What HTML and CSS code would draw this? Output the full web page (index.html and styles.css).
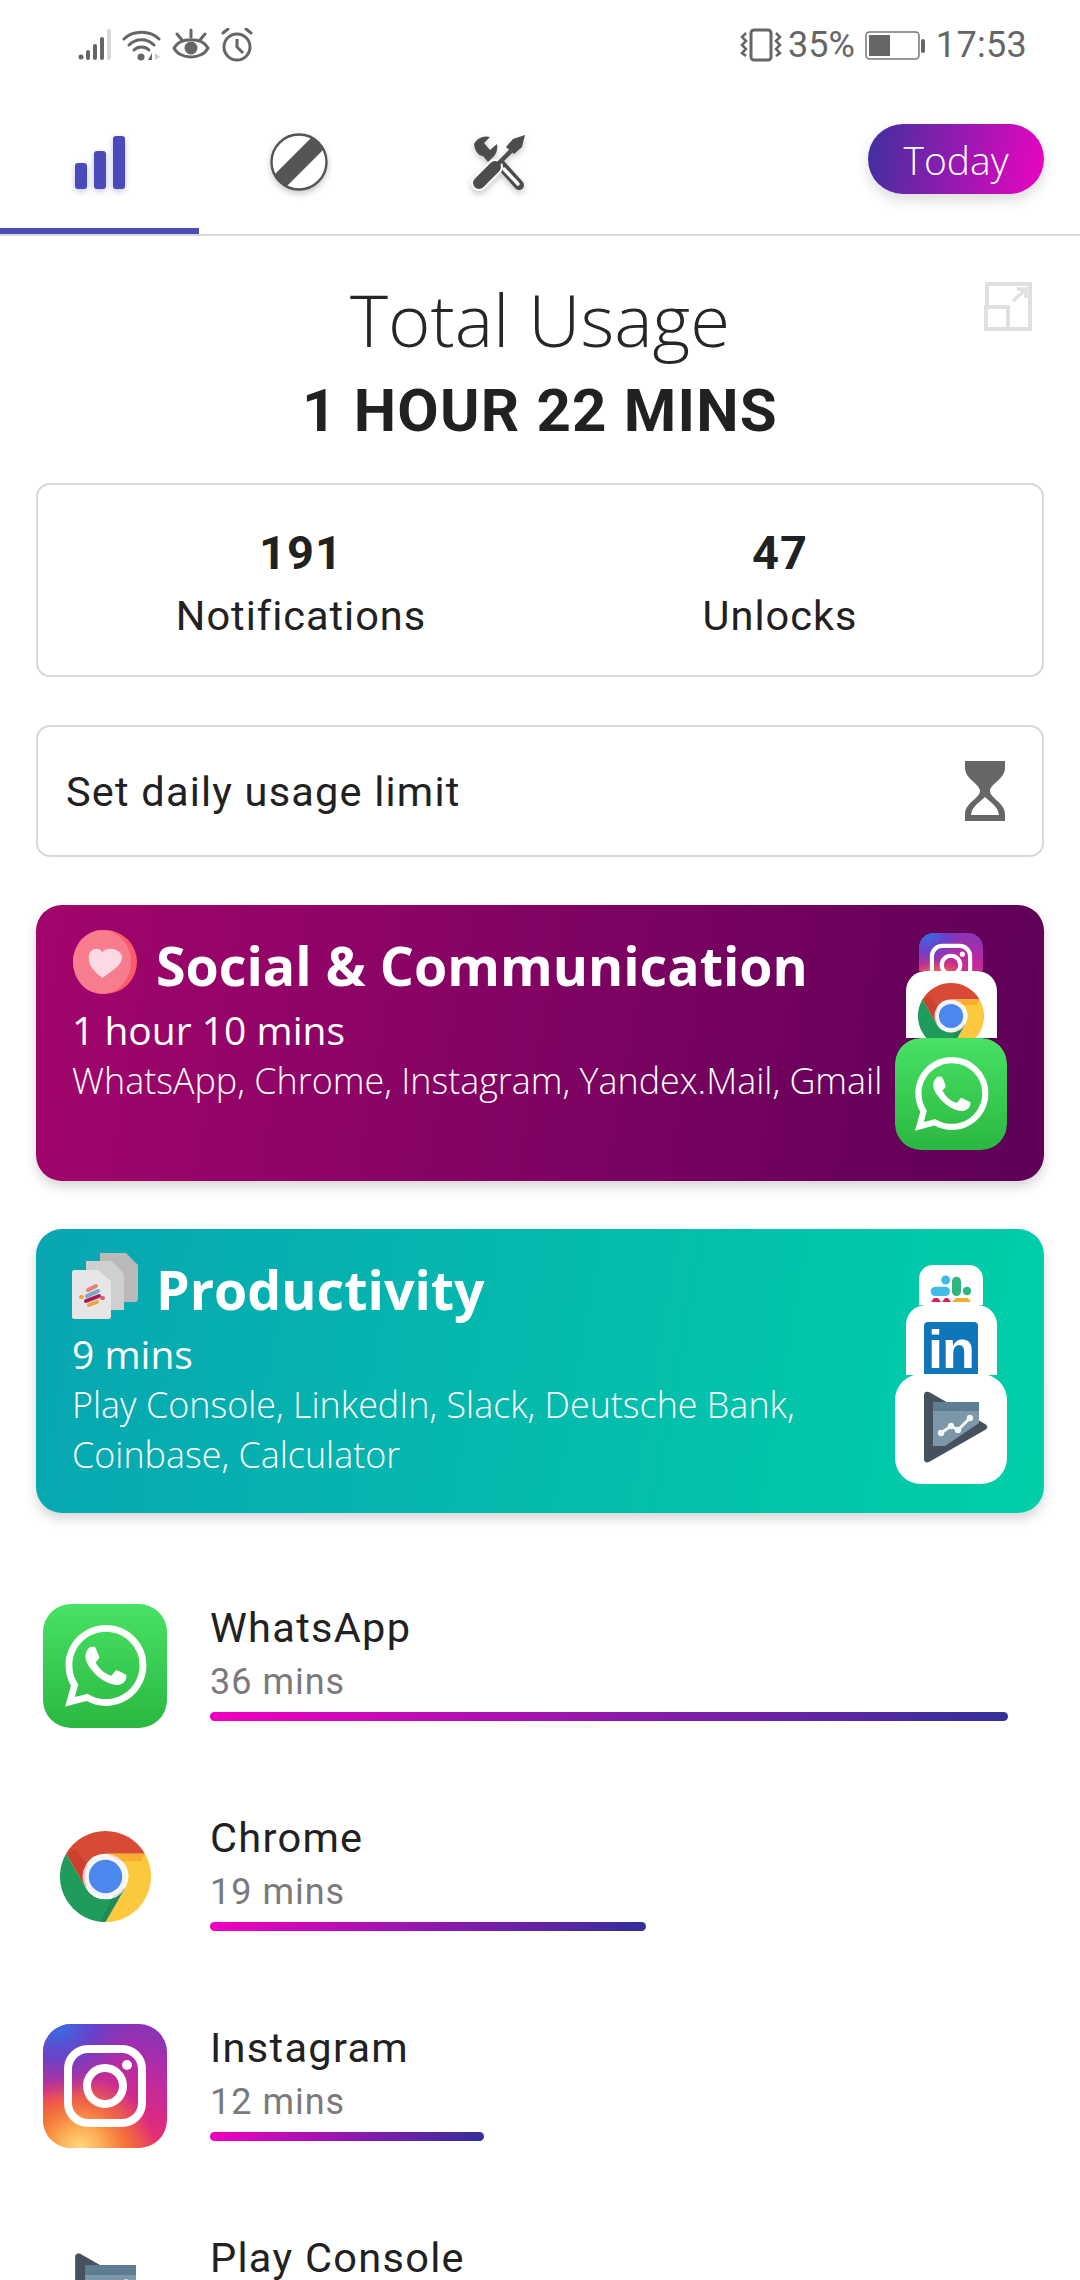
FILE: index.html
```html
<!DOCTYPE html>
<html lang="en">
<head>
<meta charset="utf-8">
<title>Total Usage</title>
<link rel="stylesheet" href="styles.css">
</head>
<body>
<svg class="defs" aria-hidden="true">
  <defs>
    <clipPath id="blockClip"><circle cx="30" cy="30" r="28"/></clipPath>
    <linearGradient id="waGrad" x1="0" y1="0" x2="0" y2="1"><stop offset="0" stop-color="#48e264"/><stop offset="1" stop-color="#2bb741"/></linearGradient>
    <linearGradient id="igBase" x1="0.25" y1="1" x2="0.6" y2="0"><stop offset="0" stop-color="#f0682f"/><stop offset="0.3" stop-color="#e42c78"/><stop offset="0.7" stop-color="#bd2a9f"/><stop offset="1" stop-color="#8f32b6"/></linearGradient>
    <radialGradient id="igGlow" cx="0.3" cy="1.02" r="0.6"><stop offset="0" stop-color="#ffdc84"/><stop offset="0.3" stop-color="#fcae55"/><stop offset="0.65" stop-color="#f77e2e" stop-opacity="0.7"/><stop offset="1" stop-color="#f77e2e" stop-opacity="0"/></radialGradient>
    <radialGradient id="igBlue" cx="0.12" cy="0" r="0.6"><stop offset="0" stop-color="#2f74e6"/><stop offset="0.5" stop-color="#5b45d0" stop-opacity="0.8"/><stop offset="1" stop-color="#6a3fc8" stop-opacity="0"/></radialGradient>
    <symbol id="whatsapp" viewBox="0 0 124 124">
      <rect width="124" height="124" rx="28" fill="url(#waGrad)"/>
      <g transform="translate(22 21) scale(3.4)"><path fill="#fff" d="M17.472 14.382c-.297-.149-1.758-.867-2.03-.967-.273-.099-.471-.148-.67.15-.197.297-.767.966-.94 1.164-.173.199-.347.223-.644.075-.297-.15-1.255-.463-2.39-1.475-.883-.788-1.48-1.761-1.653-2.059-.173-.297-.018-.458.13-.606.134-.133.298-.347.446-.52.149-.174.198-.298.298-.497.099-.198.05-.371-.025-.52-.075-.149-.669-1.612-.916-2.207-.242-.579-.487-.5-.669-.51-.173-.008-.371-.01-.57-.01-.198 0-.52.074-.792.372-.272.297-1.04 1.016-1.04 2.479 0 1.462 1.065 2.875 1.213 3.074.149.198 2.096 3.2 5.077 4.487.709.306 1.262.489 1.694.625.712.227 1.36.195 1.871.118.571-.085 1.758-.719 2.006-1.413.248-.694.248-1.289.173-1.413-.074-.124-.272-.198-.57-.347m-5.421 7.403h-.004a9.87 9.87 0 01-5.031-1.378l-.361-.214-3.741.982.998-3.648-.235-.374a9.86 9.86 0 01-1.51-5.26c.001-5.45 4.436-9.884 9.888-9.884 2.64 0 5.122 1.03 6.988 2.898a9.825 9.825 0 012.893 6.994c-.003 5.45-4.437 9.884-9.885 9.884m8.413-18.297A11.815 11.815 0 0012.05 0C5.495 0 .16 5.335.157 11.892c0 2.096.547 4.142 1.588 5.945L.057 24l6.305-1.654a11.882 11.882 0 005.683 1.448h.005c6.554 0 11.89-5.335 11.893-11.893a11.821 11.821 0 00-3.48-8.413z"/></g>
    </symbol>
    <symbol id="chrome" viewBox="0 0 90 90">
      <path fill="#d94a36" d="M45 0A45 45 0 0 1 84 22.5H45A22.5 22.5 0 0 0 25.5 56.25L6 22.5A45 45 0 0 1 45 0Z"/>
      <path fill="#fcc83d" d="M84 22.5A45 45 0 0 1 45 90L64.5 56.25A22.5 22.5 0 0 0 45 22.5Z"/>
      <path fill="#1f9b5c" d="M6 22.5A45 45 0 0 0 45 90L64.5 56.25A22.5 22.5 0 0 1 25.5 56.25Z"/>
      <path fill="#a52714" opacity=".25" d="M25.5 56.25L6 22.5L16 18L33 42Z"/>
      <path fill="#ea6100" opacity=".25" d="M45 22.5H84L80 30H60Z"/>
      <path fill="#263238" opacity=".15" d="M45 90L64.5 56.25L57 55L40 89.7Z"/>
      <circle cx="45" cy="45" r="20.5" fill="#f4f4f4"/>
      <circle cx="45" cy="45" r="16.5" fill="#4a88ee"/>
    </symbol>
    <symbol id="instagram" viewBox="0 0 124 124">
      <rect width="124" height="124" rx="28" fill="url(#igBase)"/>
      <rect width="124" height="124" rx="28" fill="url(#igGlow)"/>
      <rect width="124" height="124" rx="28" fill="url(#igBlue)"/>
      <rect x="25" y="25" width="74" height="74" rx="20" fill="none" stroke="#fff" stroke-width="8"/>
      <circle cx="62" cy="62" r="18" fill="none" stroke="#fff" stroke-width="8"/>
      <circle cx="84" cy="41" r="5" fill="#fff"/>
    </symbol>
    <symbol id="playconsole" viewBox="0 0 112 112">
      <path fill="#45525e" d="M29 21c0-3 2-4 5-3l56 32c3 2 3 4 0 6L34 88c-3 1-5 0-5-3Z"/>
      <path fill="#5d7d92" d="M38 28H84V37H38Z"/>
      <path fill="#7c97a9" d="M38 37H84V49L50 72H38Z"/>
      <path fill="none" stroke="#f3f6f7" stroke-width="3" d="M46 59L56 52L63 56L75 44"/>
      <circle cx="46" cy="59" r="3.2" fill="#f3f6f7"/><circle cx="56" cy="52" r="3.2" fill="#f3f6f7"/><circle cx="63" cy="56" r="3.2" fill="#f3f6f7"/><circle cx="75" cy="44" r="3.2" fill="#f3f6f7"/>
    </symbol>
  </defs>
</svg>

<main class="screen">
  <header class="status">
    <div class="status-left">
      <svg class="ic" width="34" height="34" viewBox="0 0 34 34"><g fill="#666"><circle cx="3" cy="29" r="2.5"/><rect x="8" y="22" width="4" height="10" rx="2"/><rect x="15" y="16" width="4" height="16" rx="2"/><rect x="22" y="9" width="4" height="23" rx="2"/></g><rect x="29" y="1" width="4" height="31" rx="2" fill="#d8d8d8"/></svg>
      <svg class="ic" width="40" height="34" viewBox="0 0 40 34"><g fill="none" stroke="#666" stroke-width="3" stroke-linecap="round"><path d="M2 11C11 2 28 2 37 11"/><path d="M7 17C14 10 25 10 32 17"/><path d="M12 22C16 18 23 18 27 22"/></g><circle cx="19" cy="29" r="3.5" fill="#666"/><path d="M26 32l4-7v7Z" fill="#666"/><path d="M33 25l5 4-5 3Z" fill="#ccc"/></svg>
      <svg class="ic" width="38" height="34" viewBox="0 0 38 34"><path d="M2 20C8 9 30 9 36 20C30 32 8 32 2 20Z" fill="none" stroke="#666" stroke-width="3"/><circle cx="19" cy="20" r="6.5" fill="#666"/><g stroke="#666" stroke-width="3" stroke-linecap="round"><path d="M19 2V9M5 6L10 12M33 6L28 12"/></g></svg>
      <svg class="ic" width="34" height="34" viewBox="0 0 34 34"><circle cx="17" cy="19" r="13" fill="none" stroke="#666" stroke-width="3"/><path d="M17 11V19L23 25" fill="none" stroke="#666" stroke-width="3"/><path d="M3 5L8 1M31 5L26 1" stroke="#666" stroke-width="3" stroke-linecap="round"/></svg>
    </div>
    <div class="status-right">
      <svg class="ic" width="42" height="34" viewBox="0 0 42 34"><rect x="11" y="2" width="20" height="30" rx="3" fill="none" stroke="#666" stroke-width="3"/><path d="M6 5L2 9L6 13L2 17L6 21L2 25L6 28M36 5L40 9L36 13L40 17L36 21L40 25L36 28" fill="none" stroke="#666" stroke-width="2.5"/></svg>
      <span class="pct">35%</span>
      <svg class="ic batt" width="62" height="30" viewBox="0 0 62 30"><rect x="1" y="2" width="53" height="27" rx="3.5" fill="none" stroke="#777" stroke-width="1.5"/><rect x="4" y="5" width="21" height="21" fill="#666"/><rect x="56" y="9" width="4" height="14" rx="2" fill="#666"/></svg>
      <span class="time">17:53</span>
    </div>
  </header>

  <nav class="tabs">
    <div class="tab tab-active">
      <svg width="54" height="58" viewBox="0 0 54 58" class="glow-blue"><g fill="#4a4abb"><rect x="2" y="29" width="12" height="26" rx="3"/><rect x="21" y="17" width="12" height="38" rx="3"/><rect x="40" y="2" width="12" height="53" rx="3"/></g></svg>
    </div>
    <div class="tab">
      <svg width="60" height="62" viewBox="0 0 60 62" class="glow-grey"><circle cx="30" cy="30" r="27.5" fill="#fff" stroke="#555" stroke-width="2.4"/><path d="M6 54L54 6" stroke="#555" stroke-width="17" clip-path="url(#blockClip)"/></svg>
    </div>
    <div class="tab">
      <svg width="56" height="58" viewBox="0 0 56 58" class="glow-grey">
        <path d="M3 10C6 4 13 1 19 3L13 9L19 16L26 10C27 16 25 21 21 24L17 28L12 22C8 22 4 18 3 10Z" fill="#4c4c4c"/>
        <path d="M30 31L48 51" stroke="#4c4c4c" stroke-width="10" stroke-linecap="round"/>
        <path d="M33 35L47 50" stroke="#fff" stroke-width="3.4" stroke-linecap="round"/>
        <path d="M8 49L24 33" stroke="#fff" stroke-width="16" stroke-linecap="round"/>
        <path d="M8 49L24 33" stroke="#4c4c4c" stroke-width="12" stroke-linecap="round"/>
        <path d="M24 33L40 17" stroke="#4c4c4c" stroke-width="4.5"/>
        <path d="M54 1L51 13L43 20L35 13L42 5Z" fill="#4c4c4c"/>
      </svg>
    </div>
    <button class="today">Today</button>
  </nav>

  <section class="total">
    <h1 class="total-label">Total Usage</h1>
    <p class="total-value">1 HOUR 22 MINS</p>
    <svg class="expand" width="48" height="50" viewBox="0 0 48 50"><g fill="none" stroke="#e0e0e0" stroke-width="4"><path d="M3 24V3H46V48H26"/><rect x="2" y="26" width="22" height="22"/><path d="M29 20L42 8M33 8H42V17" stroke-width="3.4"/></g></svg>
  </section>

  <section class="stats">
    <div class="stat"><strong class="stat-num">191</strong><span class="stat-name">Notifications</span></div>
    <div class="stat"><strong class="stat-num">47</strong><span class="stat-name">Unlocks</span></div>
  </section>

  <section class="limit">
    <span class="limit-text">Set daily usage limit</span>
    <svg width="42" height="60" viewBox="0 0 42 60"><path d="M1 0H41V7C41 18 26 23 26 30C26 37 41 42 41 53V60H1V53C1 42 16 37 16 30C16 23 1 18 1 7Z" fill="#666"/><path d="M7 54C8 45 16 41 21 36C26 41 34 45 35 54Z" fill="#fff"/></svg>
  </section>

  <article class="cat cat-social">
    <div class="cat-body">
      <div class="cat-head">
        <svg class="cat-icon" width="66" height="66" viewBox="0 0 64 66"><circle cx="32" cy="33" r="32" fill="#fb5b6c"/><ellipse cx="29" cy="33" rx="29" ry="32" fill="#f77c8e"/><path d="M29 50C20 43 15 37 15 29C15 20 26 17 29 24C32 17 49 20 49 29C49 37 38 43 29 50Z" fill="#fcdae4" transform="translate(1 0) scale(.98)"/></svg>
        <h2 class="cat-title">Social &amp; Communication</h2>
      </div>
      <p class="cat-time">1 hour 10 mins</p>
      <p class="cat-apps">WhatsApp, Chrome, Instagram, Yandex.Mail, Gmail</p>
    </div>
    <div class="stack stack-social">
      <div class="tile tile-back"><svg width="64" height="64"><use href="#instagram"/></svg></div>
      <div class="tile tile-mid tile-mid-short"><svg class="mid-chrome" width="66" height="66"><use href="#chrome"/></svg></div>
      <svg class="tile-front" width="112" height="112"><use href="#whatsapp"/></svg>
    </div>
  </article>

  <article class="cat cat-prod">
    <div class="cat-body">
      <div class="cat-head">
        <svg class="cat-icon" width="66" height="66" viewBox="0 0 66 66"><path d="M28 0H54L66 12V46C66 48 65 49 63 49H28Z" fill="#b9b9b9"/><path d="M14 8H40L52 21V57H14Z" fill="#cfcfcf"/><path d="M2 17H26L39 28V64C39 65 38 66 36 66H2C1 66 0 65 0 64V19C0 18 1 17 2 17Z" fill="#e6e6e6"/><g stroke-linecap="round" stroke-width="4"><path d="M16 37L24 33" stroke="#ec7f76"/><path d="M15 43L26 38" stroke="#7ba7c6"/><path d="M14 48L27 43" stroke="#a81c55"/><path d="M17 52L25 49" stroke="#f2a33c"/><path d="M9 44L10 44" stroke="#f2a33c"/><path d="M30 45L31 45" stroke="#d55f6a"/></g></svg>
        <h2 class="cat-title">Productivity</h2>
      </div>
      <p class="cat-time">9 mins</p>
      <p class="cat-apps">Play Console, LinkedIn, Slack, Deutsche Bank,<br>Coinbase, Calculator</p>
    </div>
    <div class="stack stack-prod">
      <div class="tile tile-back tile-white">
        <svg width="64" height="40" viewBox="0 0 64 40"><g fill="#3fbbe8"><circle cx="26.7" cy="15" r="4.5"/><rect x="11.7" y="21.7" width="19.3" height="9.3" rx="4.6"/></g><g fill="#2eb67d"><rect x="33" y="11.7" width="9" height="19.3" rx="4.5"/><circle cx="48" cy="26" r="4.2"/></g><g fill="#e01e5a"><path d="M12 37L15 33H19L22 37Z"/><path d="M23 37L26 33H29L32 37Z"/></g><path d="M33 37L37 33H49L52 37Z" fill="#ecb22e"/></svg>
      </div>
      <div class="tile tile-mid tile-mid-open"><div class="li-logo">in</div></div>
      <div class="tile-front tile-front-white"><svg width="112" height="112"><use href="#playconsole"/></svg></div>
    </div>
  </article>

  <section class="apps">
    <div class="app">
      <div class="app-icon"><svg width="124" height="124"><use href="#whatsapp"/></svg></div>
      <div class="app-info"><span class="app-name">WhatsApp</span><span class="app-time">36 mins</span><div class="bar" style="width:798px"></div></div>
    </div>
    <div class="app">
      <div class="app-icon"><svg width="91" height="91"><use href="#chrome"/></svg></div>
      <div class="app-info"><span class="app-name">Chrome</span><span class="app-time">19 mins</span><div class="bar" style="width:436px"></div></div>
    </div>
    <div class="app">
      <div class="app-icon"><svg width="124" height="124"><use href="#instagram"/></svg></div>
      <div class="app-info"><span class="app-name">Instagram</span><span class="app-time">12 mins</span><div class="bar" style="width:274px"></div></div>
    </div>
    <div class="app">
      <div class="app-icon"><svg width="124" height="124"><use href="#playconsole"/></svg></div>
      <div class="app-info"><span class="app-name">Play Console</span></div>
    </div>
  </section>
</main>
</body>
</html>
```

FILE: styles.css
```css
* { box-sizing: border-box; }
html, body { margin: 0; padding: 0; background: #fff; }
body { width: 1080px; height: 2280px; overflow: hidden; font-family: "Roboto", sans-serif; color: #212121; }
h1, h2, p { margin: 0; font-weight: inherit; }
.defs { position: absolute; width: 0; height: 0; }
.screen { width: 1080px; height: 2280px; overflow: hidden; }
.ic { display: block; flex: none; }

.status { height: 72px; padding: 28px 53px 0 78px; display: flex; justify-content: space-between; align-items: flex-start; color: #666; }
.status-left { display: flex; gap: 10px; }
.status-right { display: flex; align-items: center; height: 34px; }
.pct { font-size: 36px; line-height: 34px; margin-left: 6px; }
.batt { margin-left: 10px; }
.time { font-size: 36px; line-height: 34px; margin-left: 9px; letter-spacing: .3px; }

.tabs { height: 164px; display: flex; align-items: flex-start; border-bottom: 2px solid #d8d8d8; }
.tab { width: 200px; height: 162px; display: flex; align-items: center; justify-content: center; flex: none; padding-top: 20px; }
.tab-active { width: 199px; border-bottom: 6px solid #4a4ab8; padding-bottom: 0; padding-top: 26px; }
.glow-blue { filter: drop-shadow(0 2px 3px rgba(74,74,187,.35)); }
.glow-grey { filter: drop-shadow(0 3px 3px rgba(0,0,0,.22)); }
.today { margin-left: auto; margin-right: 36px; margin-top: 52px; width: 176px; height: 70px; border: 0; border-radius: 35px; background: linear-gradient(100deg, #3e30a0, #eb04c1); color: #fff; font: 300 39px "Open Sans", sans-serif; padding: 0; box-shadow: 0 6px 14px rgba(0,0,0,.14); }

.total { position: relative; text-align: center; height: 247px; padding-top: 37px; }
.total-label { font: 300 72.5px/92px "Open Sans", sans-serif; color: #262626; }
.total-value { font: 700 60px/66px "Roboto", sans-serif; color: #212121; letter-spacing: 1.2px; margin-top: 13px; }
.expand { position: absolute; top: 45px; right: 48px; }

.stats { margin: 0 36px; height: 194px; border: 2px solid #d8d8d8; border-radius: 14px; display: flex; }
.stat { display: flex; flex-direction: column; align-items: center; padding-top: 39px; }
.stat:first-child { width: 526px; }
.stat:last-child { width: 432px; }
.stat-num { font-size: 47px; line-height: 58px; font-weight: 700; letter-spacing: 1px; }
.stat-name { font-size: 41.5px; line-height: 50px; letter-spacing: 1px; margin-top: 9px; }

.limit { margin: 48px 36px 0; height: 132px; border: 2px solid #d8d8d8; border-radius: 14px; display: flex; align-items: center; justify-content: space-between; padding: 0 36px 0 28px; }
.limit-text { font-size: 41.5px; letter-spacing: 1.2px; }

.cat { margin: 48px 36px 0; border-radius: 26px; display: flex; justify-content: space-between; color: #fff; box-shadow: 0 6px 12px rgba(0,0,0,.16); font-family: "Open Sans", sans-serif; overflow: hidden; }
.cat-social { height: 276px; background: linear-gradient(100deg, #a3056c, #5d0058); }
.cat-prod { height: 284px; background: linear-gradient(100deg, #08a6b2, #00cfa8); }
.cat-body { padding: 28px 0 0 36px; min-width: 0; }
.cat-head { display: flex; align-items: center; gap: 18px; height: 66px; }
.cat-icon { flex: none; margin-top: -8px; }
.cat-title { font: 700 53.7px/66px "Open Sans", sans-serif; white-space: nowrap; }
.cat-time { font-size: 39px; line-height: 52px; margin-top: 5px; }
.cat-apps { font-size: 35.9px; font-weight: 300; line-height: 49.5px; white-space: nowrap; }

.stack { flex: none; width: 112px; margin-right: 37px; display: flex; flex-direction: column; align-items: center; }
.stack-social { padding-top: 28px; }
.stack-prod { padding-top: 36px; }
.tile { overflow: hidden; flex: none; display: block; }
.tile svg { display: block; }
.tile-back { width: 64px; height: 38px; border-radius: 14px 14px 0 0; }
.tile-white { background: #fff; height: 40px; }
.tile-mid { width: 91px; height: 70px; background: #fff; border-radius: 20px 20px 0 0; padding-top: 12px; }
.tile-mid-short { height: 67px; }
.tile-mid-open { overflow: visible; padding-top: 17px; }
.mid-chrome { margin: 0 auto; }
.tile-front { width: 112px; height: 112px; flex: none; display: block; border-radius: 26px; position: relative; z-index: 1; }
.tile-front-white { background: #fff; height: 110px; margin-top: -1px; overflow: hidden; }
.tile-front-white svg { display: block; }
.li-logo { width: 54px; height: 53px; margin: 0 auto; padding-top: 3px; background: #0f76b9; border-radius: 4px 4px 0 0; color: #fff; font: 700 54px/48px "Liberation Sans", sans-serif; text-align: center; letter-spacing: -1px; }

.apps { margin-top: 48px; }
.app { height: 210px; display: flex; align-items: center; padding-left: 43px; }
.app-icon { width: 124px; display: flex; justify-content: center; flex: none; }
.app-icon svg { display: block; }
.app-info { margin-left: 43px; display: flex; flex-direction: column; align-items: flex-start; align-self: flex-start; padding-top: 41px; }
.app-name { font-size: 41.5px; line-height: 52px; letter-spacing: 1.3px; color: #212121; }
.app-time { font-size: 36px; line-height: 56px; color: #7a7a7a; letter-spacing: 1px; }
.bar { height: 9px; border-radius: 5px; margin-top: 2px; background: linear-gradient(90deg, #f000c0, #33309a); }
```
